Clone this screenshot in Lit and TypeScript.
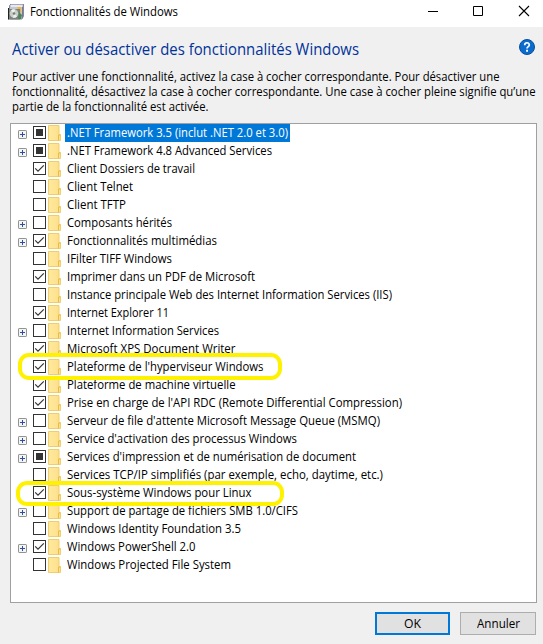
import { LitElement, html, svg, css, nothing } from "lit";
import { customElement, property, state } from "lit/decorators.js";
import { styleMap } from "lit/directives/style-map.js";

type Check = "on" | "off" | "partial";
interface Feature {
  label: string;
  width: number;
  check: Check;
  expandable?: boolean;
  selected?: boolean;
  mark?: "first" | "second";
}

const f = (label: string, width: number, check: Check, extra: Partial<Feature> = {}): Feature => ({ label, width, check, ...extra });

const FEATURES: Feature[] = [
  f(".NET Framework 3.5 (inclut .NET 2.0 et 3.0)", 221, "partial", { expandable: true, selected: true }),
  f(".NET Framework 4.8 Advanced Services", 205, "partial", { expandable: true }),
  f("Client Dossiers de travail", 128, "on"),
  f("Client Telnet", 66, "off"),
  f("Client TFTP", 59, "off"),
  f("Composants hérités", 105, "off", { expandable: true }),
  f("Fonctionnalités multimédias", 150, "on", { expandable: true }),
  f("IFilter TIFF Windows", 105, "off"),
  f("Imprimer dans un PDF de Microsoft", 188, "on"),
  f("Instance principale Web des Internet Information Services (IIS)", 325, "off"),
  f("Internet Explorer 11", 102, "on"),
  f("Internet Information Services", 152, "off", { expandable: true }),
  f("Microsoft XPS Document Writer", 168.5, "on"),
  f("Plateforme de l'hyperviseur Windows", 196.5, "on", { mark: "first" }),
  f("Plateforme de machine virtuelle", 168.5, "on"),
  f("Prise en charge de l'API RDC (Remote Differential Compression)", 335, "on"),
  f("Serveur de file d'attente Microsoft Message Queue (MSMQ)", 313, "off", { expandable: true }),
  f("Service d'activation des processus Windows", 230, "off", { expandable: true }),
  f("Services d'impression et de numérisation de document", 289, "partial", { expandable: true }),
  f("Services TCP/IP simplifiés (par exemple, echo, daytime, etc.)", 316, "off"),
  f("Sous-système Windows pour Linux", 184.5, "on", { mark: "second" }),
  f("Support de partage de fichiers SMB 1.0/CIFS", 231, "off", { expandable: true }),
  f("Windows Identity Foundation 3.5", 174, "off"),
  f("Windows PowerShell 2.0", 128.5, "on", { expandable: true }),
  f("Windows Projected File System", 164, "off"),
];

/** One line of text condensed or widened to fill a given width. */
@customElement("fit-text")
class FitText extends LitElement {
  @property() text = "";
  @property({ type: Number }) width = 0;
  @state() scale = 1;

  static styles = css`
    :host { display: inline-block; white-space: nowrap; vertical-align: top; text-align: left; }
    .box { display: block; }
    .line { display: inline-block; white-space: pre; transform-origin: 0 50%; }
  `;

  async firstUpdated() {
    await document.fonts.ready;
    const line = this.renderRoot.querySelector(".line") as HTMLElement;
    this.scale = this.width / line.getBoundingClientRect().width;
  }

  render() {
    return html`<span class="box" style=${styleMap({ width: `${this.width}px` })}
      ><span class="line" style=${styleMap({ transform: `scaleX(${this.scale})` })}>${this.text}</span></span
    >`;
  }
}

@customElement("feature-row")
class FeatureRow extends LitElement {
  @property({ attribute: false }) feature!: Feature;

  static styles = css`
    :host { display: block; height: 18px; }
    .row { position: relative; display: flex; height: 18px; align-items: flex-start; padding-left: 7px; }
    .toggle { width: 9px; height: 9px; margin: 6px 6px 0 0; flex: none; }
    .check { width: 13px; height: 13px; margin: 2px 2px 0 0; flex: none; }
    .folder { width: 13px; height: 16px; margin: 1px 4px 0 0; flex: none; }
    svg { display: block; }
    .label { height: 18px; line-height: 18px; padding: 0 2px; color: #000; }
    .selected { background: #0078d7; color: #fff; }
    .mark { position: absolute; z-index: 1; box-sizing: border-box; border: 4px solid #fff200; border-radius: 11px; }
    .first { left: 7px; top: -5px; width: 264px; height: 27px; }
    .second { left: 5px; top: -3px; width: 268px; height: 25px; }
  `;

  render() {
    const { label, width, check, expandable, selected, mark } = this.feature;
    return html`
      <div class="row">
        <div class="toggle">
          ${expandable
            ? html`<svg width="9" height="9" viewBox="0 0 9 9">
                <rect x=".5" y=".5" width="8" height="8" rx=".6" fill="#f5f5f5" stroke="#929292" />
                <path d="M2 4.5h5M4.5 2v5" stroke="#2c4f9e" />
              </svg>`
            : nothing}
        </div>
        <svg class="check" viewBox="0 0 13 13">
          <rect x=".5" y=".5" width="12" height="12" fill="#fff" stroke="#333" />
          ${check === "on" ? svg`<path d="M2.2 6.4 5 9.2l5.8-5.8" fill="none" stroke="#333" stroke-width="1.2" />` : nothing}
          ${check === "partial" ? svg`<path d="M3 3h7v7H3z" fill="#333" />` : nothing}
        </svg>
        <svg class="folder" viewBox="0 0 13 16">
          <defs>
            <linearGradient id="g" x2="1" y2="0"><stop stop-color="#ffe9a0" /><stop offset="1" stop-color="#ffdf86" /></linearGradient>
          </defs>
          <path d="M.5.5h10.500v9h1.500v6H.5z" fill="url(#g)" stroke="#efcf6d" />
          <path d="M10.5 15.5v-5.500h2" fill="none" stroke="#e5bd4c" />
        </svg>
        <div class="label ${selected ? "selected" : ""}"><fit-text .text=${label} .width=${width}></fit-text></div>
        ${mark ? html`<div class="mark ${mark}"></div>` : nothing}
      </div>
    `;
  }
}

@customElement("app-root")
class AppRoot extends LitElement {
  static styles = css`
    :host { display: block; font: 12.2px/15px "Open Sans", "Noto Sans", sans-serif; color: #000; }
    .window { box-sizing: border-box; width: 543px; height: 644px; background: #f0f0f0; display: flex; flex-direction: column; overflow: hidden; }
    .titlebar { box-sizing: border-box; height: 27px; flex: none; background: #fff; display: flex; padding: 4px 14px 0 8px; }
    .titlebar .name { margin: 0 auto 0 6px; line-height: 16px; }
    .controls { display: flex; gap: 35px; padding-top: 2px; }
    .close { margin-left: 1px; overflow: visible; }
    svg { display: block; flex: none; }
    .heading { display: flex; justify-content: space-between; height: 30px; padding: 12px 8px 0 12px; font-size: 16.2px; line-height: 20px; color: #003399; }
    .intro { display: flex; flex-direction: column; height: 54px; padding-left: 12px; }
    .list { box-sizing: border-box; height: 480px; margin: 0 6px 0 10px; flex: none; background: #fff; border: 1px solid #a0a0a0; }
    .buttons { display: flex; justify-content: flex-end; gap: 10px; padding: 9px 7px 0 0; }
    button { box-sizing: border-box; width: 76px; height: 23px; padding: 0; margin: 0; border: 1px solid #adadad; background: #e1e1e1; font: inherit; line-height: 21px; color: #000; }
    button.primary { width: 75px; border: 2px solid #0078d7; line-height: 19px; }
  `;

  render() {
    return html`
      <div class="window">
        <div class="titlebar">
          <svg width="16" height="16" viewBox="0 0 16 16">
            <path d="M1.5 1.5 3 0h12.5v12L14 15H1.5z" fill="#c5c8d2" stroke="#8587a5" />
            <path d="M3 1h11v2H3z" fill="#e8e9ee" />
            <path d="M9 3h4v6l-2-2z" fill="#f5b62c" />
            <path d="M.5 5v10.5H12V5z" fill="#7c827c" />
            <path d="M.5 4v11.5" stroke="#222" />
            <path d="M11 8l3 3-1 4h-3z" fill="#4b8554" />
            <circle cx="6" cy="9.5" r="4.3" fill="#c9cec8" />
            <path d="M6 9.5 3 6.5a4 4 0 0 1 4-1zM6 9.5l3 3a4 4 0 0 1-4 1z" fill="#eff2ed" />
            <circle cx="6" cy="9.5" r="1.2" fill="#717971" />
            <path d="M14.5 3v11" stroke="#777b90" />
          </svg>
          <fit-text class="name" .text=${"Fonctionnalités de Windows"} .width=${148}></fit-text>
          <div class="controls">
            <svg width="10" height="10" viewBox="0 0 10 10"><path d="M0 5.5h10" stroke="#000" /></svg>
            <svg width="10" height="10" viewBox="0 0 10 10"><path d="M.5.5h9v9h-9z" fill="none" stroke="#000" /></svg>
            <svg class="close" width="10" height="10" viewBox="0 0 10 10"><path d="M0 0l10 10M10 0 0 10" stroke="#000" stroke-width="1.1" /></svg>
          </div>
        </div>
        <div class="heading">
          <fit-text .text=${"Activer ou désactiver des fonctionnalités Windows"} .width=${347}></fit-text>
          <svg width="16" height="16" viewBox="0 0 16 16">
            <circle cx="8" cy="8" r="7.5" fill="#0a6cce" stroke="#0b4f9b" />
            <path d="M5.7 6.2C5.7 2.9 10.3 3.1 10.3 5.9 10.3 7.7 8 7.5 8 9.6" fill="none" stroke="#fff" stroke-width="1.7" />
            <path d="M7.1 10.8h1.9v1.9H7.1z" fill="#fff" />
          </svg>
        </div>
        <div class="intro">
          <fit-text .text=${"Pour activer une fonctionnalité, activez la case à cocher correspondante. Pour désactiver une"} .width=${487.5}></fit-text>
          <fit-text .text=${"fonctionnalité, désactivez la case à cocher correspondante. Une case à cocher pleine signifie qu’une"} .width=${523.5}></fit-text>
          <fit-text .text=${"partie de la fonctionnalité est activée."} .width=${196.5}></fit-text>
        </div>
        <div class="list">${FEATURES.map((x) => html`<feature-row .feature=${x}></feature-row>`)}</div>
        <div class="buttons">
          <button class="primary"><fit-text .text=${"OK"} .width=${17}></fit-text></button>
          <button><fit-text .text=${"Annuler"} .width=${43}></fit-text></button>
        </div>
      </div>
    `;
  }
}
